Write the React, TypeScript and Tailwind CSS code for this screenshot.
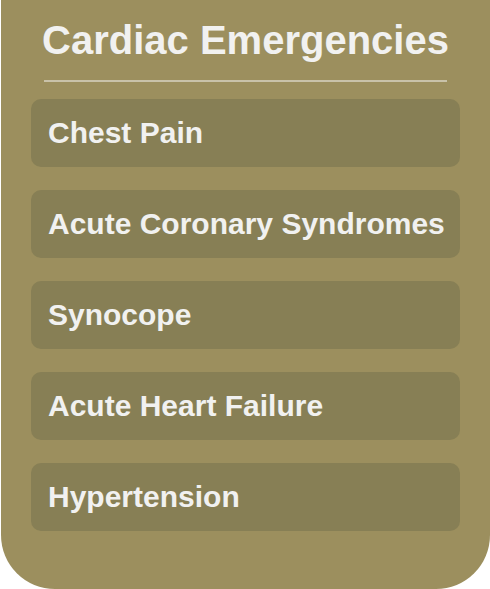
const items = [
  'Chest Pain',
  'Acute Coronary Syndromes',
  'Synocope',
  'Acute Heart Failure',
  'Hypertension',
];

export default function App() {
  return (
    <div className="w-[490px] h-[589px] bg-white" style={{ fontFamily: '"Liberation Sans", Arial, sans-serif' }}>
      <div className="ml-px h-[589px] bg-[#9c8f5e] rounded-b-[54px] px-[30px] pt-[18px]">
        <h1 className="text-center text-[40px] leading-[44px] font-bold text-[#f1f1f0]">Cardiac Emergencies</h1>
        <div className="mx-[13px] mt-[18px] h-[2px] bg-[#c9c2a9]"></div>
        <div className="mt-[17px] flex flex-col gap-[23px]">
          {items.map((item) => (
            <div key={item} className="h-[68px] rounded-[10px] bg-[#877f55] flex items-center pl-[17px]">
              <span className="text-[30px] leading-[34px] font-bold text-[#f1f1f0]">{item}</span>
            </div>
          ))}
        </div>
      </div>
    </div>
  );
}
